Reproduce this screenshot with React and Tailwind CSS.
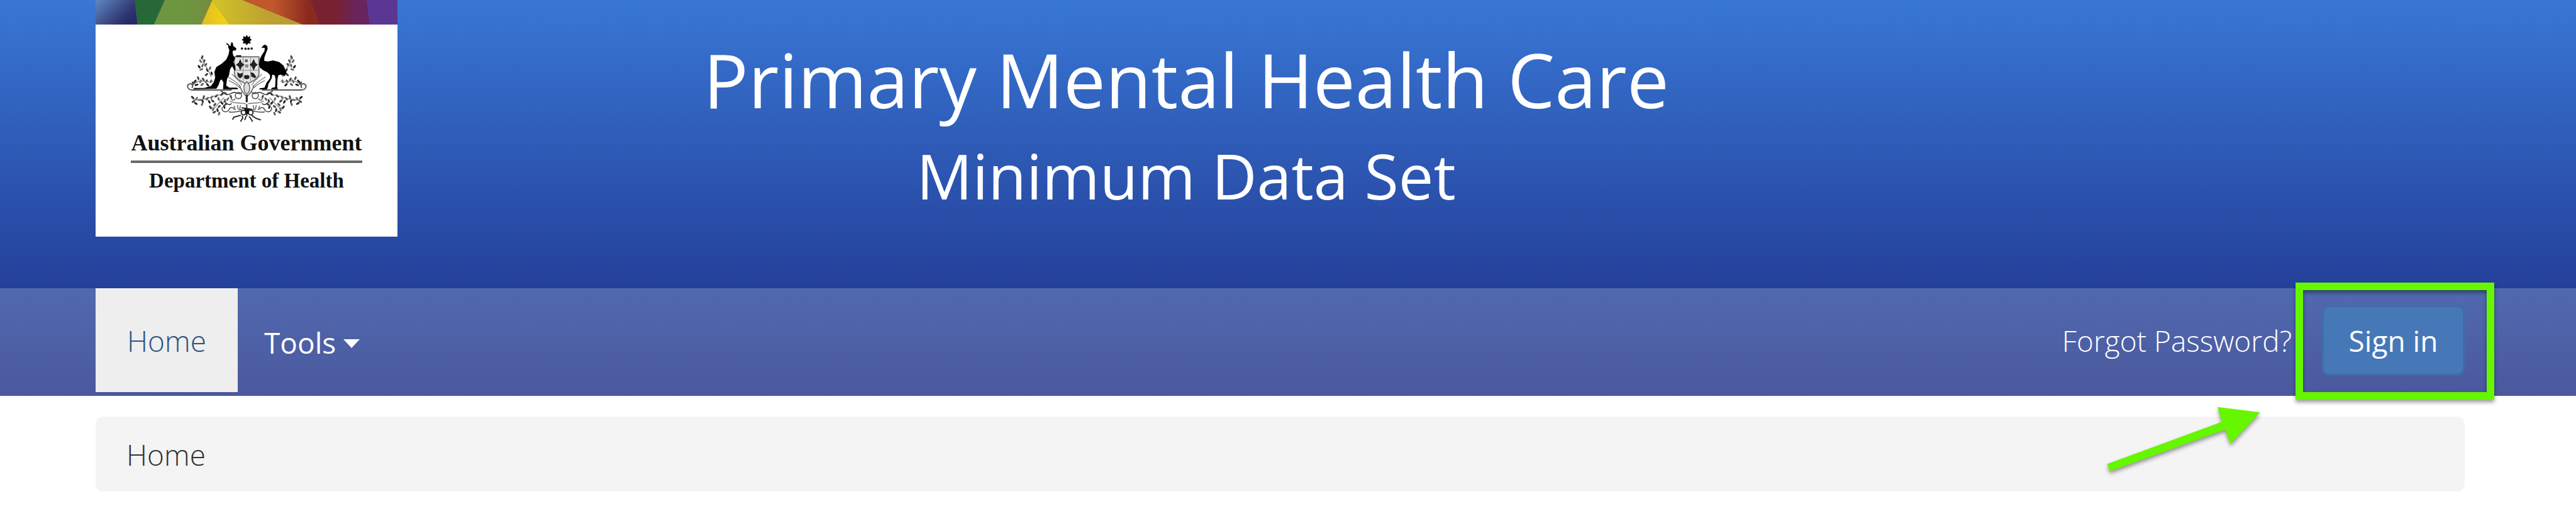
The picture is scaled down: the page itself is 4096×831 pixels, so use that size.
const leaves = [
  [150, 140, 20], [142, 160, -30], [160, 160, 30], [135, 188, -35], [152, 182, 15], [168, 178, 40],
  [176, 205, -25], [190, 196, 20], [172, 228, 50], [198, 222, -10], [146, 202, 70],
  [130, 246, -20], [114, 262, 40], [142, 262, 20], [156, 252, -35], [122, 280, 70], [150, 278, 50],
  [172, 262, 30], [178, 280, -45], [195, 262, 15], [104, 272, -30],
  [102, 344, -50], [122, 350, 30], [106, 364, 60], [118, 374, -60], [138, 356, 80], [158, 342, 15],
  [152, 362, -20], [150, 378, 20], [176, 350, 40], [186, 366, -30], [198, 344, 25], [204, 362, -50],
  [222, 336, 50], [234, 352, -20], [214, 380, 40], [192, 394, -35], [206, 404, 20], [236, 390, 50],
  [228, 408, -10], [236, 426, 20], [212, 418, 60], [250, 372, -40], [264, 362, 20], [270, 378, 60],
  [262, 392, -20], [280, 352, 35], [296, 340, -20], [250, 328, 50], [268, 322, -60],
];

function Foliage() {
  return (
    <g>
      {leaves.map(([x, y, r], i) => (
        <ellipse
          key={i}
          cx={x}
          cy={y}
          rx="5"
          ry="10"
          transform={`rotate(${r} ${x} ${y})`}
          fill={i % 3 === 0 ? "#222" : i % 3 === 1 ? "#666" : "#444"}
        />
      ))}
      <g fill="none" stroke="#777" strokeWidth="4">
        <path d="M150 135 C155 180 185 200 195 240" />
        <path d="M105 280 C140 240 165 275 205 262" />
        <path d="M100 350 C150 372 200 330 250 330" />
        <path d="M190 385 C210 420 230 370 262 345" />
        <path d="M282 240 C300 255 325 260 345 292 M285 258 C305 268 325 275 340 296 M300 225 C325 250 345 265 352 282" />
      </g>
      <g fill="none" stroke="#333" strokeWidth="5">
        <path d="M98 296 C108 282 96 270 84 276 C70 284 76 304 98 306 H300" stroke="#555" strokeWidth="6" />
        <path d="M245 312 C262 316 258 328 276 330 C292 330 300 316 316 318 C332 324 350 330 350 316" />
        <circle cx="334" cy="334" r="16" stroke="#555" />
        <path d="M300 340 C292 360 310 362 318 350" stroke="#666" />
        <path d="M268 352 C262 372 284 388 300 374" stroke="#444" />
        <path d="M252 392 C244 418 276 424 286 406 C292 390 308 392 312 404 M286 416 C300 424 330 414 350 412" stroke="#555" />
        <path d="M290 362 C320 378 345 368 370 376" stroke="#777" />
        <path d="M312 386 L318 408 M328 382 L334 406 M344 384 L340 406 L352 404" stroke="#666" />
      </g>
    </g>
  );
}

function CoatOfArms() {
  return (
    <svg viewBox="0 0 750 510" className="h-[160px] w-[236px]" role="img" aria-label="Coat of arms">
      <Foliage />
      <g transform="translate(753 0) scale(-1 1)">
        <Foliage />
      </g>
      <path
        fill="#000"
        d="M376 26 L382 38 L394 33 L392 45 L402 52 L392 58 L396 71 L383 69 L376 80 L369 69 L356 71 L360 58 L350 52 L360 45 L358 33 L370 38 Z"
      />
      <g fill="#222">
        <circle cx="352" cy="96" r="6" />
        <circle cx="370" cy="97" r="6" />
        <circle cx="385" cy="97" r="6" />
        <circle cx="401" cy="96" r="6" />
      </g>
      <path d="M312 138 H438 V222 C436 250 405 262 376 276 C346 262 316 250 314 222 Z" fill="#e4e4e4" stroke="#777" strokeWidth="6" />
      <g stroke="#888" strokeWidth="3" fill="none">
        <path d="M358 140 V205 M396 140 V205 M316 206 H436 M358 206 V262 M396 206 V262" />
      </g>
      <path d="M322 130 h26 v8 h-26z" fill="#111" />
      <g fill="#222">
        <path d="M343 148 l8 20 14 10 -14 10 -8 20 -8 -20 -14 -10 14 -10z" />
        <path d="M411 148 l9 20 12 10 -12 10 -9 20 -9 -20 -12 -10 12 -10z" />
        <circle cx="374" cy="158" r="8" fill="#666" />
        <circle cx="376" cy="184" r="9" fill="#888" />
        <path d="M328 216 l14 8 14 -6 -2 20 -12 10 -12 -12z" />
        <path d="M362 234 q14 -8 28 0 l-2 14 q-12 6 -24 0z" />
        <path d="M396 216 l14 4 14 18 -6 8 -18 -8z" />
      </g>
      <path d="M376 264 C352 282 362 318 376 326 C392 318 400 282 376 264 Z" fill="#ddd" stroke="#666" strokeWidth="5" />
      <path d="M340 282 C344 306 362 326 376 340 C392 326 408 306 412 282" fill="none" stroke="#555" strokeWidth="5" />
      <path d="M376 330 V368" stroke="#222" strokeWidth="10" />
      <path
        fill="#000"
        d="M273 68 L286 76 L290 84 L294 82 L298 64 L306 68 L307 82 L324 96 L320 106 L308 106 L304 114 L308 132 L318 146 L308 164 L318 184 L320 206 L312 204 L302 186 L292 200 L286 232 L276 250 L272 284 L288 294 L326 294 L334 302 H256 L258 268 L248 252 L240 260 L234 280 L222 300 L106 302 L108 296 L160 296 L194 286 L208 268 L216 244 L212 214 L222 190 L248 174 L272 152 L284 126 L288 104 L282 90 L283 80 L274 76 Z"
      />
      <path
        fill="#000"
        d="M450 94 L458 82 L468 76 L480 84 L482 98 L474 118 L466 140 L464 158 L482 162 L510 156 L540 164 L562 182 L572 204 L578 220 L568 236 L548 228 L536 232 L532 250 L530 292 L534 302 L500 302 L502 296 L520 292 L522 250 L518 232 L506 228 L502 248 L486 276 L480 302 L440 304 L442 297 L466 294 L476 270 L494 246 L494 230 L480 216 L460 206 L442 192 L438 176 L442 150 L452 130 L466 108 L468 94 L460 92 Z"
      />
      <g fill="none" stroke="#222" strokeWidth="6">
        <circle cx="360" cy="420" r="12" />
        <circle cx="396" cy="420" r="12" />
        <path d="M376 378 V440 M350 396 L402 404 M346 434 L310 444 L304 456 M352 436 L356 448 L344 466 M372 440 L366 458 M388 440 L396 450 L406 466 M400 434 L424 450 L448 458" />
      </g>
      <path d="M364 402 h26 l-4 26 h-16z" fill="#111" />
    </svg>
  );
}

function ColourBand() {
  return (
    <svg viewBox="0 0 1422 123" preserveAspectRatio="none" className="block h-[39px] w-full" aria-hidden="true">
      <defs>
        <linearGradient id="b1" x1="0" y1="0" x2="1" y2="0.6">
          <stop offset="0" stopColor="#6088c4" />
          <stop offset="0.8" stopColor="#2f356f" />
          <stop offset="1" stopColor="#28296a" />
        </linearGradient>
        <linearGradient id="b2">
          <stop offset="0.55" stopColor="#6c9640" />
          <stop offset="1" stopColor="#788a3c" />
        </linearGradient>
        <linearGradient id="b3">
          <stop offset="0" stopColor="#dfbe26" />
          <stop offset="0.8" stopColor="#f1d012" />
        </linearGradient>
        <linearGradient id="b4">
          <stop offset="0" stopColor="#d2c428" />
          <stop offset="0.6" stopColor="#bda22f" />
          <stop offset="1" stopColor="#b99a33" />
        </linearGradient>
        <linearGradient id="b5">
          <stop offset="0.4" stopColor="#c0582c" />
          <stop offset="0.85" stopColor="#8a2a1e" />
        </linearGradient>
        <linearGradient id="b6">
          <stop offset="0.4" stopColor="#782130" />
          <stop offset="0.8" stopColor="#68245c" />
        </linearGradient>
      </defs>
      <rect width="1422" height="123" fill="#5b3794" />
      <path d="M0 0H184L197 123H0z" fill="url(#b1)" />
      <path d="M184 0H326L274 123H197z" fill="#276838" />
      <path d="M326 0H550L498 123H274z" fill="url(#b2)" />
      <path d="M550 0L632 123H498z" fill="url(#b3)" />
      <path d="M550 0H692L976 123H632z" fill="url(#b4)" />
      <path d="M692 0H1012L1055 123H976z" fill="url(#b5)" />
      <path d="M1012 0H1276L1291 123H1055z" fill="url(#b6)" />
    </svg>
  );
}

function Logo() {
  return (
    <a href="#" className="flex h-[376px] w-[480px] shrink-0 flex-col items-center bg-white font-['Liberation_Serif',serif] font-bold text-[#111]">
      <ColourBand />
      <div className="mt-2">
        <CoatOfArms />
      </div>
      <span className="whitespace-nowrap text-[36px] leading-10">Australian Government</span>
      <span className="mt-2 h-1 w-[368px] bg-[#6a6a6a]" />
      <span className="mt-2 whitespace-nowrap text-[33px] leading-10">Department of Health</span>
    </a>
  );
}

function PointerArrow() {
  return (
    <svg
      viewBox="3540 676 280 130"
      className="pointer-events-none absolute right-[489px] top-[180px] h-[123px] w-[264px] overflow-visible drop-shadow-[0_4px_3px_rgba(0,0,0,0.4)]"
      aria-hidden="true"
    >
      <path d="M3548 781L3741.500 710L3734 685L3806 694L3756 747L3747 723L3553 793z" fill="#66f600" />
    </svg>
  );
}

export default function App() {
  return (
    <div className="min-h-screen bg-white font-['Open_Sans',sans-serif] text-[46px] leading-[64px]">
      <header className="flex min-h-[458px] items-start bg-linear-to-b from-[#3977d5] to-[#24409a] pl-[152px] pr-[177px]">
        <Logo />
        <div className="w-[2508px] pt-[60px] text-center text-white">
          <h1 className="text-[119px] leading-[132px]">Primary Mental Health Care</h1>
          <h2 className="mt-8 text-[99px] leading-[110px]">Minimum Data Set</h2>
        </div>
      </header>

      <nav className="relative flex h-[171px] items-start bg-linear-to-b from-[#5069af] to-[#4b589d] pl-[152px] pr-[177px] text-white">
        <a href="#" className="flex h-[165px] w-[226px] items-center justify-center bg-[#eee] font-light text-[#2c527f]">
          Home
        </a>
        <button type="button" className="flex h-[171px] items-center gap-3 px-[42px] font-medium">
          Tools
          <svg viewBox="0 0 26 14" className="mt-1 h-[14px] w-[26px]" aria-hidden="true">
            <path d="M0 0H26L13 14z" fill="#fff" />
          </svg>
        </button>
        <div className="ml-auto flex h-[165px] items-center gap-12">
          <a href="#" className="font-light">Forgot Password?</a>
          <div className="relative">
            <button type="button" className="flex h-[112px] w-[227px] items-center justify-center rounded-xl border-3 border-[#3f6ea8] bg-[#4678b8] font-medium">
              Sign in
            </button>
            <div className="pointer-events-none absolute -bottom-[38px] -left-[42px] -right-[47px] -top-[36px] border-12 border-[#66f600] drop-shadow-[0_4px_3px_rgba(0,0,0,0.4)]" />
          </div>
        </div>
        <PointerArrow />
      </nav>

      <main className="pb-[50px] pl-[152px] pr-[177px] pt-[33px]">
        <ol className="flex h-[119px] items-center rounded-xl bg-[#f4f4f4] px-[49px] font-light text-[#333]">
          <li>Home</li>
        </ol>
      </main>
    </div>
  );
}
